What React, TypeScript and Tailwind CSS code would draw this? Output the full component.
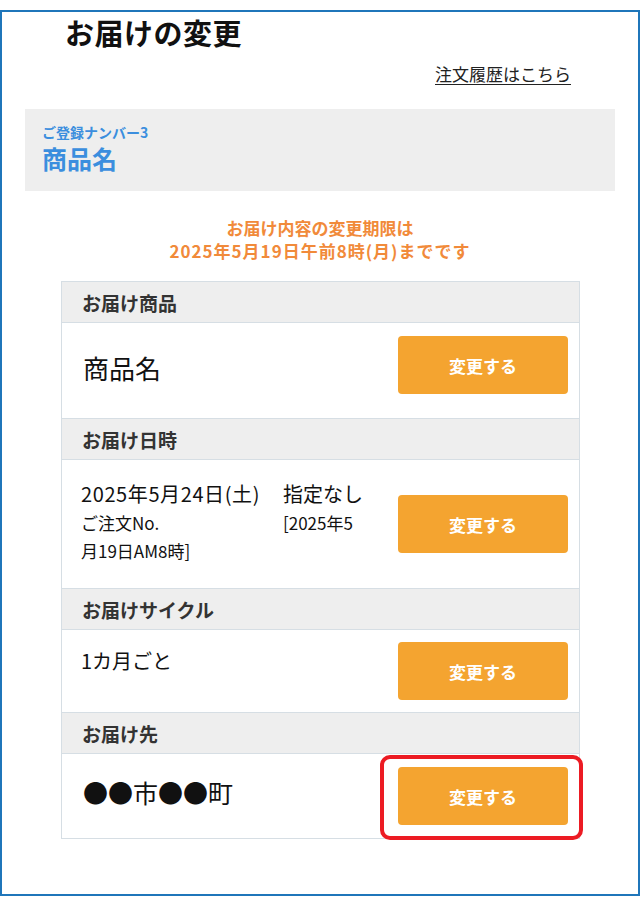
import React from "react";

const font = { fontFamily: '"Noto Sans CJK JP", "Noto Sans", sans-serif' };

function ChangeButton() {
  return (
    <button className="flex h-[58px] w-[170px] items-center justify-center rounded-[4px] bg-[#f4a430] text-[17px] font-bold leading-none text-white">
      変更する
    </button>
  );
}

function SectionHeader({ label }: { label: string }) {
  return (
    <div className="flex h-[41px] items-center border-b border-[#d6dee4] bg-[#eeeeee] pl-[20px] text-[19px] font-bold leading-none text-[#333333]">
      {label}
    </div>
  );
}

export default function App() {
  return (
    <div className="h-[909px] w-[640px] bg-white" style={font}>
      <div className="mt-[10px] h-[886px] w-[640px] border-2 border-[#1f76ba] bg-white">
        <div className="pl-[63px] pt-[6px]">
          <h1 className="text-[29px] font-bold leading-none tracking-[0.5px] text-[#111111]">お届けの変更</h1>
        </div>
        <div className="mt-[18px] flex justify-end pr-[67px]">
          <a className="text-[17px] leading-none text-[#222222] underline underline-offset-[3px]">
            注文履歴はこちら
          </a>
        </div>

        <div className="mx-[23px] mt-[27px] h-[82px] bg-[#eeeeee] pl-[17px] pt-[15px]">
          <div className="text-[14px] font-bold leading-[16px] text-[#3b8ede]">ご登録ナンバー3</div>
          <div className="mt-[3px] text-[25px] font-bold leading-[30px] text-[#3b8ede]">商品名</div>
        </div>

        <div className="mt-[25px] text-center text-[17px] font-bold leading-[23px] text-[#f18a3a]">
          <div>お届け内容の変更期限は</div>
          <div className="tracking-[1px]">2025年5月19日午前8時(月)までです</div>
        </div>

        <div className="ml-[59px] mt-[19px] w-[519px] border border-[#d6dee4]">
          <SectionHeader label="お届け商品" />
          <div className="flex h-[96px] justify-between border-b border-[#d6dee4] pl-[21px] pr-[11px]">
            <div className="pt-[32px] text-[26px] leading-none text-[#111111]">商品名</div>
            <div className="mt-[13px]">
              <ChangeButton />
            </div>
          </div>

          <SectionHeader label="お届け日時" />
          <div className="flex h-[129px] items-center justify-between border-b border-[#d6dee4] pl-[19px] pr-[11px]">
            <div className="self-start pt-[19px] text-[#111111]">
              <div className="grid grid-cols-[202px_auto] text-[20px] leading-[30px]">
                <span className="tracking-[0.6px]">2025年5月24日(土)</span>
                <span>指定なし</span>
              </div>
              <div className="grid grid-cols-[202px_auto] text-[17px] leading-[28px]">
                <span>ご注文No.</span>
                <span>[2025年5</span>
              </div>
              <div className="text-[17px] leading-[28px]">月19日AM8時]</div>
            </div>
            <ChangeButton />
          </div>

          <SectionHeader label="お届けサイクル" />
          <div className="flex h-[83px] justify-between border-b border-[#d6dee4] pl-[19px] pr-[11px]">
            <div className="pt-[21px] text-[20px] leading-none text-[#111111]">1カ月ごと</div>
            <div className="mt-[12px]">
              <ChangeButton />
            </div>
          </div>

          <SectionHeader label="お届け先" />
          <div className="flex h-[84px] justify-between pl-[21px] pr-[11px]">
            <div className="pt-[26px] text-[25px] leading-none text-[#111111]">●●市●●町</div>
            <div className="relative mt-[13px] h-[58px]">
              <ChangeButton />
              <div className="pointer-events-none absolute -bottom-[15px] -left-[18px] -right-[15px] -top-[12px] rounded-[10px] border-[4px] border-[#ec1b23]" />
            </div>
          </div>
        </div>
      </div>
    </div>
  );
}
